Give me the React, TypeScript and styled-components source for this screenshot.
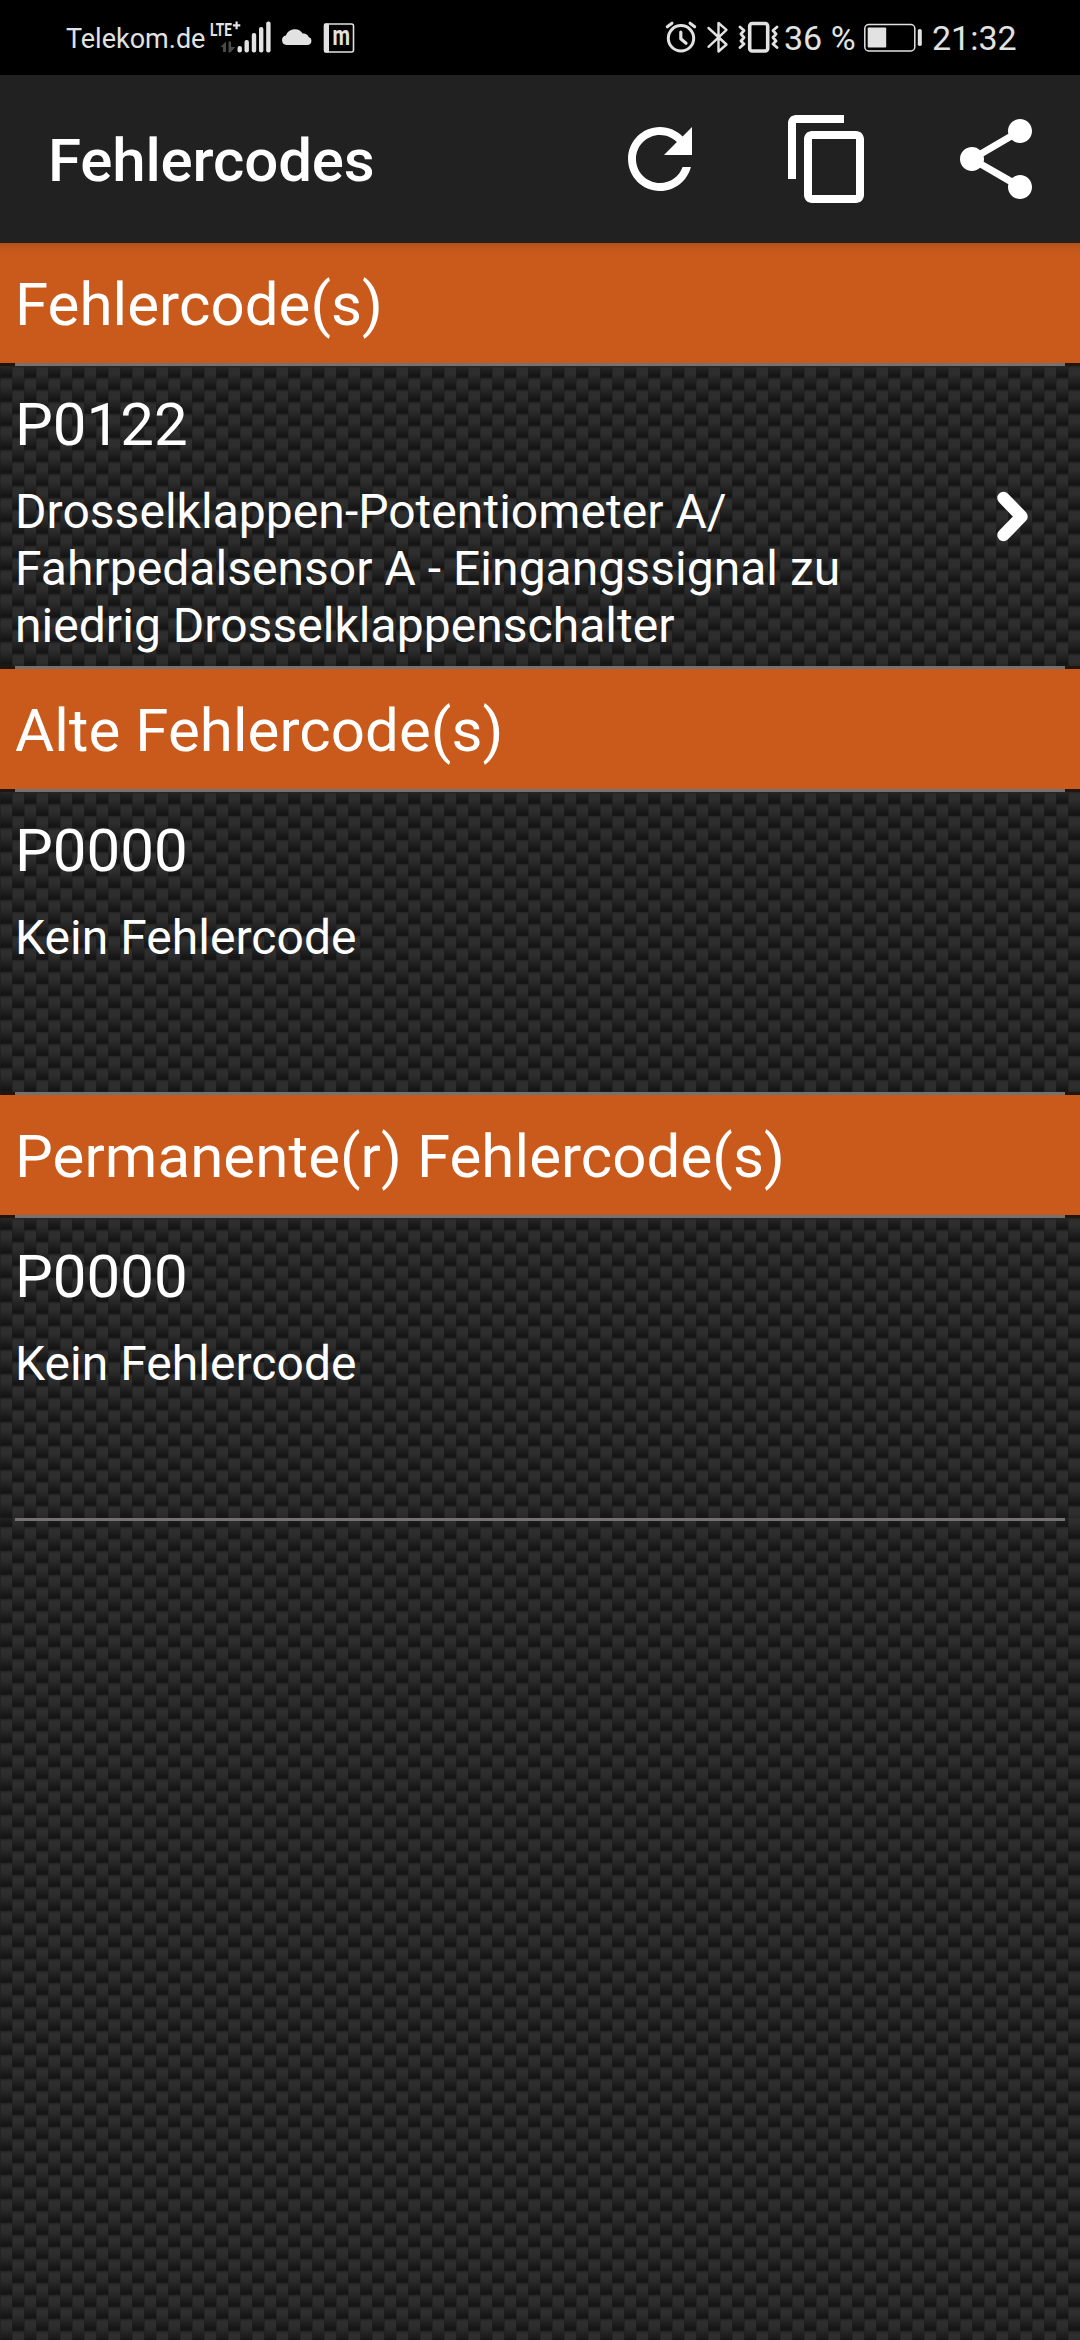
import React from "react";
import styled, { createGlobalStyle } from "styled-components";

/* 24px carbon weave: two 12px columns, shifted by half a period */
const weave = `<svg xmlns="http://www.w3.org/2000/svg" width="24" height="24"><defs><linearGradient id="g" x1="0" y1="0" x2="0" y2="1"><stop offset="0" stop-color="#232323"/><stop offset=".1" stop-color="#2e2e2e"/><stop offset=".3" stop-color="#2e2e2e"/><stop offset=".52" stop-color="#262626"/><stop offset=".9" stop-color="#151515"/><stop offset="1" stop-color="#181818"/></linearGradient></defs><rect width="24" height="24" fill="#1a1a1a"/><g fill="url(#g)"><rect x="0" y="-12" width="12" height="24"/><rect x="0" y="12" width="12" height="24"/><rect x="12" y="0" width="12" height="24"/></g><g fill="#1c1c1c" opacity=".55"><rect x="0" y="0" width="1" height="24"/><rect x="12" y="0" width="1" height="24"/></g></svg>`;
const weaveUrl = `url("data:image/svg+xml,${encodeURIComponent(weave)}")`;

const GlobalStyle = createGlobalStyle`
  body {
    margin: 0;
    background: #000;
    font-family: Roboto, "Noto Sans", sans-serif;
    color: #fff;
  }
`;

const Screen = styled.div`
  display: flex;
  flex-direction: column;
  width: 1080px;
  height: 2340px;
  overflow: hidden;
`;

const StatusBar = styled.div`
  display: flex;
  justify-content: space-between;
  height: 75px;
  padding: 0 66px;
  background: #000;
  color: #e2e2e2;
`;

const StatusGroup = styled.div`
  display: flex;
  align-items: flex-start;
`;

const StatusText = styled.span<{ $size: number; $width: number; $top: number }>`
  width: ${(p) => p.$width}px;
  padding-top: ${(p) => p.$top}px;
  font-size: ${(p) => p.$size}px;
  line-height: 40px;
  white-space: nowrap;
`;

const StatusIcon = styled.svg`
  display: block;
  flex: none;
  height: 75px;
`;

const AppBar = styled.header`
  display: flex;
  align-items: center;
  flex: none;
  height: 168px;
  box-sizing: border-box;
  padding: 0 36px 0 48px;
  background: #212121;
`;

const Title = styled.h1`
  flex: 1;
  margin: 0;
  padding-top: 4px;
  font-size: 60px;
  font-weight: 500;
  letter-spacing: -0.15px;
  line-height: 70px;
`;

const Actions = styled.div`
  display: flex;
  gap: 72px;
`;

const ActionButton = styled.button`
  width: 96px;
  height: 96px;
  padding: 0;
  border: 0;
  background: none;
  color: #fff;

  svg {
    display: block;
    width: 96px;
    height: 96px;
    fill: currentColor;
  }
`;

const Content = styled.main`
  flex: 1;
  background: ${weaveUrl};
`;

const SectionHeader = styled.h2<{ $shadow?: boolean }>`
  height: 120px;
  box-sizing: border-box;
  margin: 0;
  padding: 27px 15px 0;
  background: ${(p) =>
    p.$shadow ? "linear-gradient(#b35019, #c2571b 5px, #c95a1c 13px)" : "#c95a1c"};
  font-size: 60px;
  font-weight: 400;
  letter-spacing: 0.06px;
  line-height: 70px;
`;

const Divider = styled.div`
  height: 3px;
  padding: 0 15px;
  background: #20150f;

  &::after {
    content: "";
    display: block;
    height: 3px;
    background: #747170;
  }
`;

const LastDivider = styled(Divider)`
  background: none;
`;

const CodeRow = styled.div`
  display: flex;
  height: 300px;
  box-sizing: border-box;
  padding: 0 15px;
  background: ${weaveUrl};
`;

const CodeBody = styled.div`
  width: 885px;
  padding-top: 24px;
`;

const Code = styled.div`
  font-size: 60px;
  line-height: 70px;
`;

const Description = styled.p`
  margin: 23px 0 0;
  font-size: 48px;
  letter-spacing: 0.04px;
  line-height: 57px;
  white-space: pre-line;
`;

const Chevron = styled.svg`
  width: 40px;
  height: 300px;
  margin-left: 92px;
`;

interface Section {
  title: string;
  code: string;
  text: string;
  link?: boolean;
}

const sections: Section[] = [
  {
    title: "Fehlercode(s)",
    code: "P0122",
    text: "Drosselklappen-Potentiometer A/\nFahrpedalsensor A - Eingangssignal zu\nniedrig Drosselklappenschalter",
    link: true,
  },
  { title: "Alte Fehlercode(s)", code: "P0000", text: "Kein Fehlercode" },
  { title: "Permanente(r) Fehlercode(s)", code: "P0000", text: "Kein Fehlercode" },
];

const actions = [
  {
    label: "refresh",
    d: "M17.65 6.35C16.2 4.9 14.21 4 12 4c-4.42 0-7.99 3.58-7.99 8s3.57 8 7.99 8c3.73 0 6.84-2.55 7.73-6h-2.08c-.82 2.33-3.04 4-5.65 4-3.31 0-6-2.69-6-6s2.69-6 6-6c1.66 0 3.14.69 4.22 1.78L13 11h7V4l-2.35 2.35z",
  },
  {
    label: "copy",
    d: "M16 1H4c-1.1 0-2 .9-2 2v14h2V3h12V1zm3 4H8c-1.1 0-2 .9-2 2v14c0 1.1.9 2 2 2h11c1.1 0 2-.9 2-2V7c0-1.1-.9-2-2-2zm0 16H8V7h11v14z",
  },
  {
    label: "share",
    d: "M18 16c-.76 0-1.44.3-1.96.77L8.910 12.700c.05-.23.09-.46.09-.7s-.04-.47-.09-.7l7.050-4.110c.54.5 1.250.81 2.040.81 1.660 0 3-1.340 3-3s-1.340-3-3-3-3 1.340-3 3c0 .24.04.47.09.7L8.040 9.810C7.500 9.310 6.790 9 6 9c-1.660 0-3 1.340-3 3s1.340 3 3 3c.79 0 1.500-.31 2.040-.81l7.050 4.120c-.05.22-.09.45-.09.69 0 1.660 1.340 3 3 3s3-1.340 3-3-1.340-3-3-3z",
  },
];

const ink = "#e2e2e2";

function SignalIcons() {
  return (
    <StatusIcon width={150} viewBox="208 0 150 75">
      <g fill={ink}>
        <text x="210" y="36" fontSize="19" fontWeight="700" textLength="22" lengthAdjust="spacingAndGlyphs">
          LTE
        </text>
        <path d="M235.5 21.5h2.2v2.7h2.6v2.2h-2.6v2.8h-2.2v-2.8h-2.6v-2.2h2.6z" />
        <rect x="237.5" y="46" width="4.4" height="6.5" rx="2.1" />
        <rect x="244.5" y="40" width="4.4" height="12.5" rx="2" />
        <rect x="251.8" y="33" width="4.4" height="19.5" rx="2" />
        <rect x="259" y="27" width="4.4" height="25.5" rx="2" />
        <rect x="266.2" y="21.5" width="4.4" height="31" rx="2" />
      </g>
      <path fill="#4a4a4a" d="M226 41.5v10.500h-3v-5h-2.500zM228.500 41.500h2.600v5.500h4.300l-5 5.500h-1.900z" />
      <path
        fill={ink}
        d="M286.500 45a4.800 4.800 0 0 1-.6-9.500a9.400 9.400 0 0 1 16.800-2a5.800 5.800 0 0 1 6 3.600a4.100 4.100 0 0 1-.7 7.900z"
      />
      <rect x="324.500" y="24" width="29" height="28" rx="2" fill="none" stroke={ink} strokeWidth="1.600" />
      <rect x="324" y="23.500" width="5" height="29" rx="1" fill={ink} />
      <text x="332.500" y="45" fontSize="27" fontWeight="700" fill={ink} textLength="17.500" lengthAdjust="spacingAndGlyphs">
        m
      </text>
    </StatusIcon>
  );
}

function ModeIcons() {
  return (
    <StatusIcon width={120} viewBox="664 0 120 75">
      <g fill="none" stroke={ink} strokeWidth="3" strokeLinecap="round" strokeLinejoin="round">
        <circle cx="681" cy="38.300" r="12.700" />
        <path d="M680.800 32v6.800l5.200 4.400" strokeWidth="3.200" />
        <path d="M667.300 26.800l4.700-3.600M690 23.200l4.700 3.600" />
        <path d="M708.500 28l18 16.500-8 7V23l8 6.800-18 17" strokeWidth="2.400" />
        <rect x="749.700" y="23.500" width="18" height="27.500" rx="2.500" strokeWidth="3.600" />
        <path d="M740 27l4 3.500-3 3.500 3 3.500-3 3.500 3 3-4 3.500M777 27l-4 3.500 3 3.500-3 3.500 3 3.500-3 3 4 3.500" strokeWidth="2.800" />
      </g>
    </StatusIcon>
  );
}

function BatteryIcon() {
  return (
    <StatusIcon width={70} viewBox="862 0 70 75">
      <rect x="864.800" y="24.500" width="50" height="26.500" rx="4" fill="none" stroke={ink} strokeWidth="1.500" />
      <rect x="867.700" y="27.500" width="18.500" height="20" rx="1" fill={ink} />
      <rect x="917.800" y="29" width="4" height="17" rx="1.800" fill={ink} />
    </StatusIcon>
  );
}

export default function App() {
  return (
    <>
      <GlobalStyle />
      <Screen>
        <StatusBar>
          <StatusGroup>
            <StatusText $size={27} $width={142} $top={19}>
              Telekom.de
            </StatusText>
            <SignalIcons />
          </StatusGroup>
          <StatusGroup>
            <ModeIcons />
            <StatusText $size={34} $width={78} $top={18}>
              36 %
            </StatusText>
            <BatteryIcon />
            <StatusText $size={34} $width={82} $top={18}>
              21:32
            </StatusText>
          </StatusGroup>
        </StatusBar>
        <AppBar>
          <Title>Fehlercodes</Title>
          <Actions>
            {actions.map((a) => (
              <ActionButton key={a.label} aria-label={a.label}>
                <svg viewBox="0 0 24 24">
                  <path d={a.d} />
                </svg>
              </ActionButton>
            ))}
          </Actions>
        </AppBar>
        <Content>
          {sections.map((s, i) => (
            <React.Fragment key={s.title}>
              <SectionHeader $shadow={i === 0}>{s.title}</SectionHeader>
              <Divider />
              <CodeRow>
                <CodeBody>
                  <Code>{s.code}</Code>
                  <Description>{s.text}</Description>
                </CodeBody>
                {s.link && (
                  <Chevron viewBox="992 366 40 300">
                    <path
                      d="M1003.500 498l18 18.500-18 18.500"
                      fill="none"
                      stroke="#fff"
                      strokeWidth="12.500"
                      strokeLinecap="round"
                      strokeLinejoin="round"
                    />
                  </Chevron>
                )}
              </CodeRow>
              {i === sections.length - 1 ? <LastDivider /> : <Divider />}
            </React.Fragment>
          ))}
        </Content>
      </Screen>
    </>
  );
}
